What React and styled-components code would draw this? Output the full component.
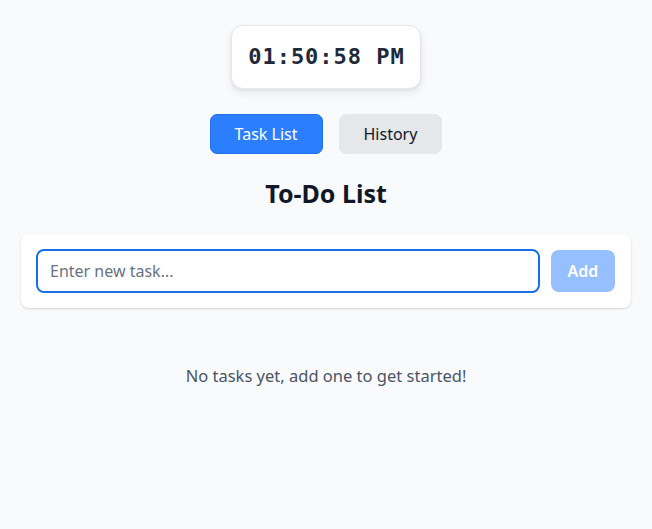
import React, { useState } from 'react'
import styled, { createGlobalStyle } from 'styled-components'

const GlobalStyle = createGlobalStyle`
  html, body {
    margin: 0;
    padding: 0;
    background: #f9fafb;
    font-family: "Noto Sans", "Segoe UI", sans-serif;
    color: #101828;
  }
  * { box-sizing: border-box; }
`

const Page = styled.div`
  min-height: 529px;
  padding: 25px 21px 0;
  display: flex;
  flex-direction: column;
  align-items: center;
`

const Clock = styled.div`
  background: #fff;
  border: 1px solid #e5e7eb;
  border-radius: 12px;
  box-shadow: 0 4px 8px rgba(0, 0, 0, 0.08), 0 1px 3px rgba(0, 0, 0, 0.06);
  padding: 15px 15px 15px 16px;
  font-family: "DejaVu Sans Mono", "Liberation Mono", monospace;
  font-weight: 700;
  font-size: 22px;
  line-height: 32px;
  letter-spacing: 1px;
  color: #1e2939;
  margin-bottom: 25px;
`

const Tabs = styled.div`
  display: flex;
  gap: 16px;
  margin-bottom: 23px;
`

const Tab = styled.button`
  height: 40px;
  padding: 0 24px;
  border-radius: 7px;
  border: 1px solid ${p => (p.$active ? '#1f6ff0' : '#e5e7eb')};
  background: ${p => (p.$active ? '#2b7fff' : '#e5e7eb')};
  color: ${p => (p.$active ? '#fff' : '#101828')};
  font-family: inherit;
  font-size: 16px;
  cursor: pointer;
`

const Title = styled.h1`
  margin: 0 0 25px;
  font-size: 25px;
  line-height: 32px;
  font-weight: 700;
  color: #101828;
`

const Card = styled.form`
  width: 100%;
  background: #fff;
  border-radius: 8px;
  box-shadow: 0 1px 3px rgba(0, 0, 0, 0.1), 0 1px 2px rgba(0, 0, 0, 0.06);
  padding: 15px 16px 15px 15px;
  display: flex;
  align-items: center;
  gap: 11px;
`

const Input = styled.input`
  flex: 1;
  height: 44px;
  border: 2px solid #1a6fe8;
  border-radius: 8px;
  padding: 0 12px;
  font-family: inherit;
  font-size: 16px;
  color: #101828;
  outline: none;
  &::placeholder { color: #6a7282; }
`

const AddButton = styled.button`
  width: 64px;
  height: 42px;
  border: none;
  border-radius: 8px;
  background: #95bfff;
  color: #fff;
  font-family: inherit;
  font-size: 16px;
  font-weight: 600;
`

const Empty = styled.p`
  margin: 56px 0 0;
  font-size: 16.5px;
  line-height: 24px;
  color: #4a5565;
`

export default function App() {
  const [text, setText] = useState('')
  return (
    <>
      <GlobalStyle />
      <Page>
        <Clock>01:50:58 PM</Clock>
        <Tabs>
          <Tab $active>Task List</Tab>
          <Tab>History</Tab>
        </Tabs>
        <Title>To-Do List</Title>
        <Card onSubmit={e => e.preventDefault()}>
          <Input
            placeholder="Enter new task..."
            value={text}
            onChange={e => setText(e.target.value)}
          />
          <AddButton type="submit" disabled={!text}>Add</AddButton>
        </Card>
        <Empty>No tasks yet, add one to get started!</Empty>
      </Page>
    </>
  )
}
